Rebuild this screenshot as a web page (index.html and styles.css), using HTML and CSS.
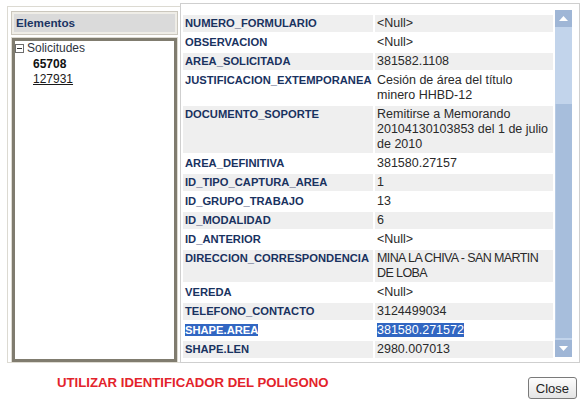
FILE: index.html
```html
<!DOCTYPE html>
<html>
<head>
<meta charset="utf-8">
<title>Elementos</title>
<link rel="stylesheet" href="styles.css">
</head>
<body>
<div class="main">
  <div class="left">
    <div class="hdr"><div class="hdr-in">Elementos</div></div>
    <div class="tree">
      <div class="node"><svg class="tog" width="9" height="9" viewBox="0 0 9 9"><rect x="0.5" y="0.5" width="8" height="8" fill="#fff" stroke="#6e6e6e"/><line x1="2" y1="4.5" x2="7" y2="4.5" stroke="#333"/></svg><span>Solicitudes</span></div>
      <div class="child cur">65708</div>
      <div class="child"><span class="lnk">127931</span></div>
    </div>
  </div>
  <div class="right">
    <div class="view">
      <table class="attrs">
        <colgroup><col class="c-lbl"><col class="c-val"></colgroup>
        <tr><td class="lbl">NUMERO_FORMULARIO</td><td class="val">&lt;Null&gt;</td></tr>
        <tr><td class="lbl">OBSERVACION</td><td class="val">&lt;Null&gt;</td></tr>
        <tr><td class="lbl">AREA_SOLICITADA</td><td class="val">381582.1108</td></tr>
        <tr><td class="lbl">JUSTIFICACION_EXTEMPORANEA</td><td class="val">Cesión de área del título minero HHBD-12</td></tr>
        <tr><td class="lbl">DOCUMENTO_SOPORTE</td><td class="val">Remitirse a Memorando 20104130103853 del 1 de julio de 2010</td></tr>
        <tr><td class="lbl">AREA_DEFINITIVA</td><td class="val">381580.27157</td></tr>
        <tr><td class="lbl">ID_TIPO_CAPTURA_AREA</td><td class="val">1</td></tr>
        <tr><td class="lbl">ID_GRUPO_TRABAJO</td><td class="val">13</td></tr>
        <tr><td class="lbl">ID_MODALIDAD</td><td class="val">6</td></tr>
        <tr><td class="lbl">ID_ANTERIOR</td><td class="val">&lt;Null&gt;</td></tr>
        <tr><td class="lbl">DIRECCION_CORRESPONDENCIA</td><td class="val caps">MINA LA CHIVA - SAN MARTIN DE LOBA</td></tr>
        <tr><td class="lbl">VEREDA</td><td class="val">&lt;Null&gt;</td></tr>
        <tr><td class="lbl">TELEFONO_CONTACTO</td><td class="val">3124499034</td></tr>
        <tr><td class="lbl"><span class="sel">SHAPE.AREA</span></td><td class="val"><span class="sel">381580.271572</span></td></tr>
        <tr><td class="lbl">SHAPE.LEN</td><td class="val">2980.007013</td></tr>
      </table>
    </div>
    <div class="sbar">
      <div class="sbtn"><svg width="9" height="5" viewBox="0 0 9 5"><polygon points="0,5 9,5 4.5,0" fill="#fff"/></svg></div>
      <div class="track"><div class="thumb"></div></div>
      <div class="sbtn"><svg width="9" height="5" viewBox="0 0 9 5"><polygon points="0,0 9,0 4.5,5" fill="#fff"/></svg></div>
    </div>
  </div>
</div>
<div class="foot">
  <span class="warn">UTILIZAR IDENTIFICADOR DEL POLIGONO</span>
  <button class="close" type="button">Close</button>
</div>
</body>
</html>
```
FILE: styles.css
```css
* { box-sizing: border-box; }

body {
  margin: 0;
  background: #fff;
  font-family: "Liberation Sans", Arial, sans-serif;
}

.main {
  display: flex;
  align-items: flex-start;
  padding: 3px 0 0 7px;
}

/* ---------- left pane ---------- */
.left {
  width: 173px;
  height: 357px;
  margin-top: 3px;
  border: 1px solid #dcdad2;
  border-right: none;
  padding: 4px 0 0 3px;
}

.hdr {
  width: 167px;
  border: 1px solid #cbc7bd;
  background: #efede7;
  padding: 2px;
}

.hdr-in {
  background: #dadada;
  height: 18px;
  line-height: 18px;
  padding-left: 2px;
  font-size: 11.7px;
  font-weight: bold;
  color: #1b3463;
}

.tree {
  width: 165px;
  height: 324px;
  margin: 3px 0 0 1px;
  border: 3px solid #807c6f;
  box-shadow: 0 0 0 1px #dedbd2;
  background: #fff;
  font-size: 12px;
  line-height: 15.5px;
  color: #2e3440;
}

.node {
  display: flex;
  align-items: center;
}

.tog {
  margin-right: 3px;
  flex: none;
}

.child {
  padding-left: 18px;
  color: #1a1a1a;
}

.cur { font-weight: bold; color: #111; }

.lnk { text-decoration: underline; }

/* ---------- right pane ---------- */
.right {
  display: flex;
  align-items: flex-start;
  width: 400px;
  height: 360px;
  border: 1px solid #cfcfcf;
}

.view {
  width: 374px;
  height: 355px;
  margin-top: 2px;
  overflow: hidden;
}

.attrs {
  width: 374px;
  table-layout: fixed;
  border-collapse: separate;
  border-spacing: 2px;
  margin-top: 7px;
}

.c-lbl { width: 190px; }
.c-val { width: 178px; }

.attrs td {
  padding: 1px 2px;
  line-height: 15px;
  vertical-align: top;
}

.attrs tr:nth-child(odd) td { background: #efefef; }

.lbl {
  font-size: 11.2px;
  font-weight: bold;
  color: #19325f;
  white-space: nowrap;
}

.val {
  font-size: 12.5px;
  color: #2a2a2a;
}

.caps { letter-spacing: -0.6px; }

.sel {
  background: #3166c2;
  color: #fff;
}

/* scrollbar */
.sbar {
  width: 17px;
  margin-top: 6px;
  display: flex;
  flex-direction: column;
}

.sbtn {
  height: 17px;
  background: #9fb6d6;
  display: flex;
  align-items: center;
  justify-content: center;
}

.track {
  height: 313px;
  background: #c2d4eb;
  padding-top: 77px;
}

.thumb {
  height: 234px;
  background: #a7bedc;
  border-left: 1px solid #b6cae4;
}

/* ---------- footer ---------- */
.foot {
  display: flex;
  justify-content: space-between;
  align-items: flex-start;
  padding: 11px 9px 0 57px;
}

.warn {
  font-size: 13.2px;
  line-height: 18px;
  font-weight: bold;
  color: #e3232b;
}

.close {
  margin: 3px 0 0 0;
  height: 22px;
  padding: 0 7px;
  font-family: "Liberation Sans", Arial, sans-serif;
  font-size: 13px;
  color: #222;
  border: 1px solid #7a7a7a;
  border-radius: 3px;
  background: linear-gradient(#fdfdfd, #e4e4e4);
}
```
